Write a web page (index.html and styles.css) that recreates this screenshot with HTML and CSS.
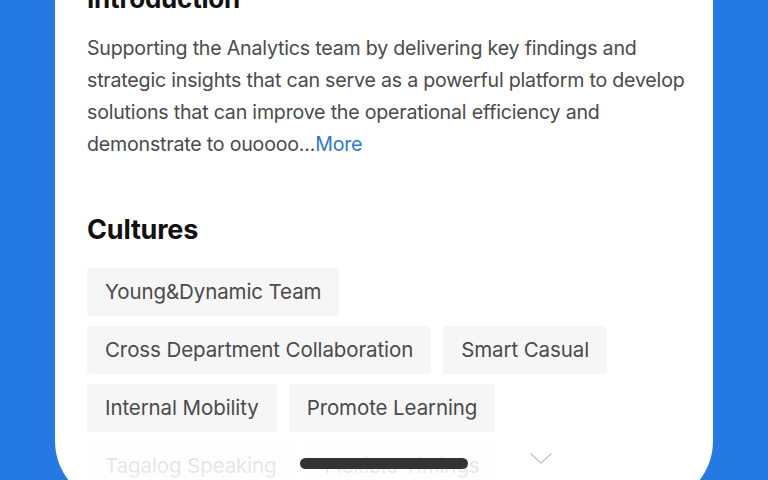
FILE: index.html
```html
<!doctype html>
<html>
<head>
<meta charset="utf-8">
<title>Company profile</title>
<link rel="stylesheet" href="styles.css">
</head>
<body>
<div class="stage">
	<div class="card">
		<h2 class="title">Introduction</h2>
		<p class="intro">Supporting the Analytics team by delivering key findings and strategic insights that can serve as a powerful platform to develop solutions that can improve the operational efficiency and demonstrate to ouoooo...<a class="more" href="#">More</a></p>

		<h2 class="title cultures">Cultures</h2>
		<div class="tags-wrap">
			<ul class="tags">
				<li>Young&amp;Dynamic Team</li>
				<li>Cross Department Collaboration</li>
				<li>Smart Casual</li>
				<li>Internal Mobility</li>
				<li>Promote Learning</li>
				<li>Tagalog Speaking</li>
				<li>Flexible Timings</li>
			</ul>
			<div class="fade">
				<svg class="chevron" width="22" height="12" viewBox="0 0 22 12"><path d="M1 1 L11 10 L21 1" fill="none" stroke="#c8c8c8" stroke-width="1.6" stroke-linecap="round" stroke-linejoin="round"/></svg>
			</div>
		</div>
		<div class="home-bar"></div>
	</div>
</div>
</body>
</html>
```

FILE: styles.css
```css
* {margin:0; padding:0; list-style:none; box-sizing:border-box;}

html, body {height:480px; overflow:hidden;}
body {background:#2479e2; font-family:Inter, "Liberation Sans", sans-serif;}

.stage {padding:0 55px;}

.card {position:relative; background:#fff; height:522px; margin-top:-17px; padding:0 20px 0 32px; border-radius:0 0 64px 64px;}

.title {font-size:26px; line-height:32px; font-weight:700; color:#111; letter-spacing:-0.2px;}
.cultures {margin-top:54px; font-size:27px;}

.intro {margin-top:17px; font-size:19.6px; line-height:32px; color:#4a4a4a; letter-spacing:-0.2px;}
.more {color:#2f78cc; text-decoration:none;}

.tags-wrap {position:relative; margin-top:22px;}
.tags {display:flex; flex-wrap:wrap; gap:10px 12px;}
.tags li {height:48px; line-height:48px; padding:0 18px; background:#f6f6f6; border-radius:4px; font-size:20.5px; color:#4a4a4a; letter-spacing:-0.1px;}

.fade {position:absolute; left:0; right:0; bottom:0; height:50px; background:linear-gradient(rgba(255,255,255,0.82), rgba(255,255,255,0.9));}
.chevron {position:absolute; left:443px; top:13px;}

.home-bar {position:absolute; left:245px; top:475px; width:168px; height:11px; border-radius:6px; background:#333;}
```
